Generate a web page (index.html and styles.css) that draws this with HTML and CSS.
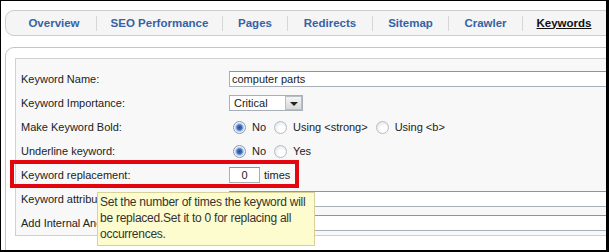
FILE: index.html
```html
<!doctype html>
<html>
<head>
    <meta charset="utf-8">
    <title>Keywords</title>
    <link rel="stylesheet" href="styles.css">
</head>
<body>
<div class="frame">
    <!-- tab bar -->
    <div class="tabs">
        <a class="tab t-overview">Overview</a>
        <a class="tab t-seo">SEO Performance</a>
        <a class="tab t-pages">Pages</a>
        <a class="tab t-redirects">Redirects</a>
        <a class="tab t-sitemap">Sitemap</a>
        <a class="tab t-crawler">Crawler</a>
        <a class="tab t-keywords active">Keywords</a>
    </div>

    <!-- keyword form -->
    <div class="panel">
        <div class="box">
            <div class="row">
                <div class="label">Keyword Name:</div>
                <div class="value"><span class="input wide">computer parts</span></div>
            </div>
            <div class="row">
                <div class="label">Keyword Importance:</div>
                <div class="value">
                    <span class="select">Critical<span class="arrow"></span></span>
                </div>
            </div>
            <div class="row">
                <div class="label">Make Keyword Bold:</div>
                <div class="value">
                    <span class="radio on"></span><span class="opt">No</span>
                    <span class="radio"></span><span class="opt">Using &lt;strong&gt;</span>
                    <span class="radio"></span><span class="opt">Using &lt;b&gt;</span>
                </div>
            </div>
            <div class="row">
                <div class="label">Underline keyword:</div>
                <div class="value">
                    <span class="radio on"></span><span class="opt">No</span>
                    <span class="radio"></span><span class="opt">Yes</span>
                </div>
            </div>
            <div class="row">
                <div class="label">Keyword replacement:</div>
                <div class="value">
                    <span class="input num">0</span><span class="unit">times</span>
                </div>
            </div>
            <div class="row">
                <div class="label">Keyword attributes:</div>
                <div class="value"><span class="input wide"></span></div>
            </div>
            <div class="row">
                <div class="label">Add Internal Anchor:</div>
                <div class="value"><span class="input wide"></span></div>
            </div>
        </div>
    </div>

    <!-- highlight and tooltip on top -->
    <div class="highlight"></div>
    <div class="tip">Set the number of times the keyword will<br>be replaced.Set it to 0 for replacing all<br>occurrences.</div>
</div>
</body>
</html>
```

FILE: styles.css
```css
/* page frame */

body {
    margin: 0;
    font-family: "Liberation Sans", Arial, sans-serif;
}

.frame {
    position: relative;
    width: 609px;
    height: 252px;
    box-sizing: border-box;
    border: 1px solid #000;
    border-right-width: 3px;
    border-bottom-width: 2px;
    overflow: hidden;
    background: #fff;
}

/* tabs */

.tabs {
    display: flex;
    align-items: center;
    width: 660px;
    height: 24px;
    margin: 9px 0 0 4px;
    padding-left: 6px;
    border: 1px solid #cdcdcd;
    border-radius: 9px 0 0 9px;
    background: #f5f5f5;
}

.tab {
    font-size: 11.5px;
    font-weight: bold;
    color: #3562a6;
    line-height: 15px;
    text-align: center;
    white-space: nowrap;
    border-left: 1px solid #d6d6d6;
}

.tab:first-child {
    border-left: 0;
}

.t-overview { width: 84px; }
.t-seo { width: 125px; }
.t-pages { width: 64px; }
.t-redirects { width: 84px; }
.t-sitemap { width: 75px; }
.t-crawler { width: 73px; }
.t-keywords { width: 82px; }

.tab.active {
    color: #111;
    text-decoration: underline;
}

/* panel */

.panel {
    width: 660px;
    height: 300px;
    margin: 11px 0 0 4px;
    padding: 10px 0 0 9px;
    border: 1px solid #c4c4c4;
    border-radius: 9px 0 0 0;
    background: #fff;
}

.box {
    padding: 8px 0 0 5px;
    border: 1px solid #d0d0d0;
    background: #f8f8f8;
    font-size: 11px;
    color: #222;
}

.row {
    display: flex;
    align-items: center;
    height: 24px;
}

.label {
    width: 208px;
    white-space: nowrap;
}

.value {
    display: flex;
    align-items: center;
}

.input {
    display: inline-block;
    box-sizing: border-box;
    height: 16px;
    padding: 0 2px;
    border: 1px solid #a9afb6;
    border-top-color: #8e959c;
    background: #fff;
    line-height: 14px;
}

.input.wide {
    width: 400px;
}

.input.num {
    width: 31px;
    text-align: center;
}

.unit {
    margin-left: 4px;
}

.select {
    position: relative;
    display: inline-block;
    box-sizing: border-box;
    width: 74px;
    height: 16px;
    padding-left: 4px;
    border: 1px solid #a9afb6;
    background: #fff;
    line-height: 14px;
}

.arrow {
    position: absolute;
    top: 0;
    right: 0;
    width: 17px;
    height: 14px;
    box-sizing: border-box;
    border: 1px solid #b9bec4;
    background: linear-gradient(#f4f4f4, #d8d8d8);
}

.arrow::after {
    content: "";
    position: absolute;
    left: 4px;
    top: 5px;
    border-left: 4px solid transparent;
    border-right: 4px solid transparent;
    border-top: 4px solid #222;
}

.radio {
    display: inline-block;
    box-sizing: border-box;
    width: 13px;
    height: 13px;
    margin: 0 6px 0 4px;
    border: 1px solid #b3bcc6;
    border-radius: 50%;
    background: radial-gradient(circle at 60% 65%, #ffffff 30%, #d9dde2 100%);
}

.radio.on {
    background: radial-gradient(circle, #1f4f9e 0, #3d73c6 2.5px, #9db8df 3.5px, #f2f4f7 5px);
    border-color: #8a99ab;
}

.opt {
    margin-right: 4px;
}

/* overlays */

.highlight {
    position: absolute;
    left: 9px;
    top: 159px;
    width: 289px;
    height: 28px;
    box-sizing: border-box;
    border: 4px solid #e4060f;
}

.tip {
    position: absolute;
    left: 96px;
    top: 191px;
    width: 218px;
    height: 54px;
    box-sizing: border-box;
    padding: 1px 0 0 2px;
    border: 1px solid #d8d29a;
    background: #fdfcce;
    font-size: 12px;
    letter-spacing: -0.25px;
    line-height: 16px;
    color: #333;
    white-space: nowrap;
}
```
